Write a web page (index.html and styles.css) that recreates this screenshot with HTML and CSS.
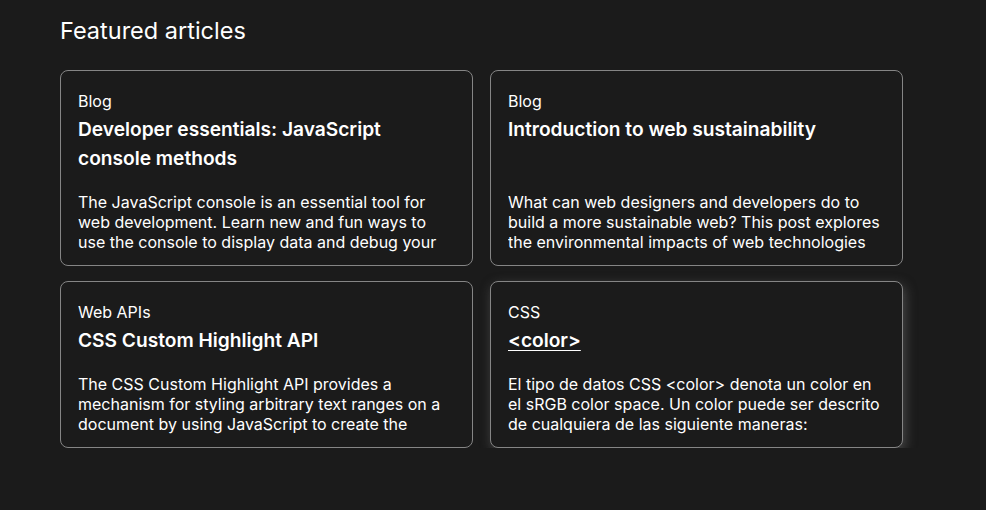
FILE: index.html
```html
<!DOCTYPE html>
<html lang="en">
<head>
<meta charset="utf-8">
<title>Featured articles</title>
<link rel="stylesheet" href="styles.css">
</head>
<body>
<section class="featured">
  <h2 class="featured-title">Featured articles</h2>
  <div class="tiles">
    <article class="tile">
      <p class="tile-tag">Blog</p>
      <h3 class="tile-title">Developer essentials: JavaScript console methods</h3>
      <p class="tile-desc">The JavaScript console is an essential tool for web development. Learn new and fun ways to use the console to display data and debug your code.</p>
    </article>
    <article class="tile">
      <p class="tile-tag">Blog</p>
      <h3 class="tile-title">Introduction to web sustainability</h3>
      <p class="tile-desc">What can web designers and developers do to build a more sustainable web? This post explores the environmental impacts of web technologies and looks at some of the ways we can build greener websites.</p>
    </article>
    <article class="tile">
      <p class="tile-tag">Web APIs</p>
      <h3 class="tile-title">CSS Custom Highlight API</h3>
      <p class="tile-desc">The CSS Custom Highlight API provides a mechanism for styling arbitrary text ranges on a document by using JavaScript to create the ranges, and CSS to style them.</p>
    </article>
    <article class="tile tile-hover">
      <p class="tile-tag">CSS</p>
      <h3 class="tile-title"><a class="tile-link" href="#">&lt;color&gt;</a></h3>
      <p class="tile-desc">El tipo de datos CSS &lt;color&gt; denota un color en el sRGB color space. Un color puede ser descrito de cualquiera de las siguiente maneras:</p>
    </article>
  </div>
</section>
</body>
</html>
```

FILE: styles.css
```css
html, body {
  margin: 0;
  padding: 0;
  background: #1b1b1b;
  color: #ffffff;
  font-family: Inter, "Noto Sans", sans-serif;
}

.featured {
  padding: 16px 0 0 60px;
  width: 843px;
}

.featured-title {
  margin: 0 0 25px 0;
  font-size: 23.5px;
  line-height: 29px;
  font-weight: 400;
}

.tiles {
  display: grid;
  grid-template-columns: 1fr 1fr;
  gap: 15px 17px;
}

.tile {
  display: flex;
  flex-direction: column;
  border: 1px solid #858585;
  border-radius: 8px;
  background: #1b1b1b;
  padding: 17px 16px 13px 17px;
}

.tile-hover {
  box-shadow: 2px 4px 12px rgba(120, 120, 120, 0.5);
}

.tile-tag {
  margin: 0;
  font-size: 16px;
  line-height: 27px;
}

.tile-title {
  margin: 0;
  padding-right: 6px;
  font-size: 19.15px;
  line-height: 29px;
  font-weight: 600;
}

.tile-link {
  color: #ffffff;
  text-decoration: underline;
  text-underline-offset: 3px;
}

.tile-desc {
  margin: auto 0 0 0;
  padding-top: 19px;
  font-size: 16px;
  line-height: 20px;
  height: 60px;
  overflow: hidden;
}
```
